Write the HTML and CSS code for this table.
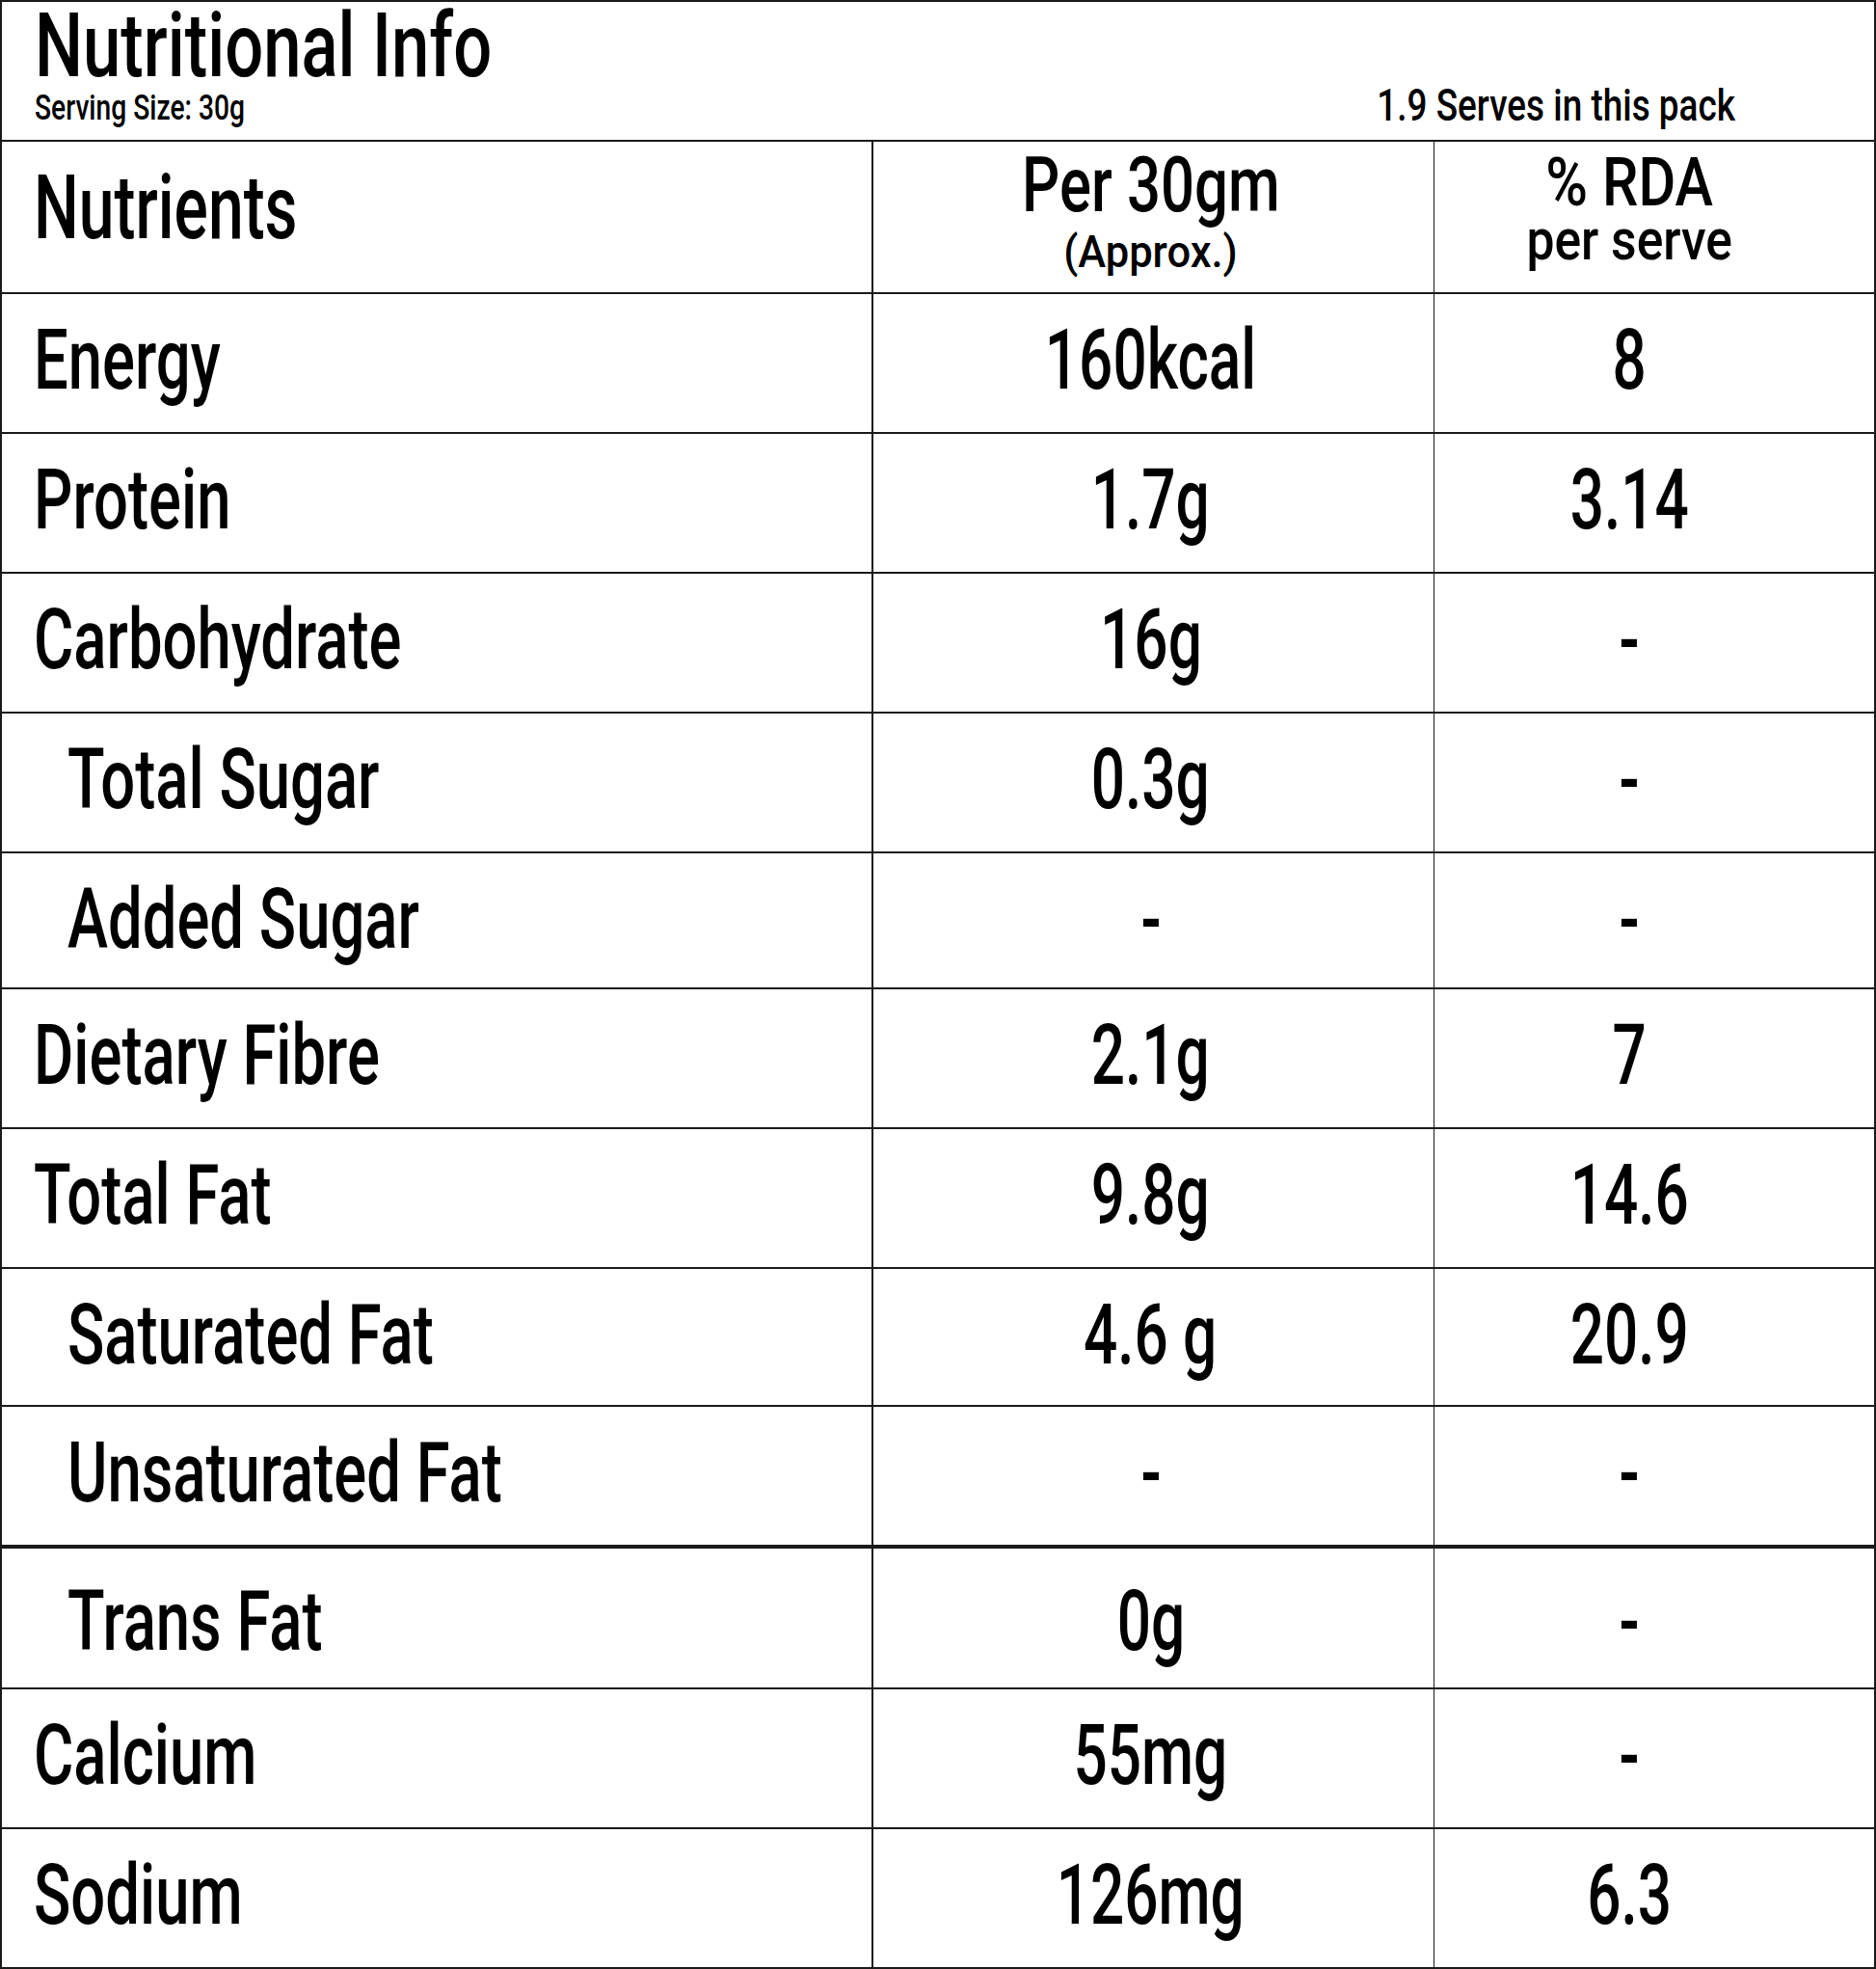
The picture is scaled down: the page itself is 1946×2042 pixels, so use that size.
FILE: index.html
```html
<!DOCTYPE html>
<html lang="en">
<head>
<meta charset="utf-8">
<title>Nutritional Info</title>
<link rel="stylesheet" href="styles.css">
</head>
<body>
<div class="panel">
  <div class="title-block">
    <div class="title-left">
      <div class="sx title">Nutritional Info</div>
      <div class="sx serving">Serving Size: 30g</div>
    </div>
    <div class="serves"><span class="sx serves-text">1.9 Serves in this pack</span></div>
  </div>

  <div class="row row-head">
    <div class="cell cell-name head-name"><div class="sx nutrients">Nutrients</div></div>
    <div class="cell cell-per head-per">
      <span class="sx per">Per 30gm</span>
      <span class="sx approx">(Approx.)</span>
    </div>
    <div class="cell cell-rda head-rda">
      <span class="sx rda">% RDA</span>
      <span class="sx perserve">per serve</span>
    </div>
  </div>

  <div class="row">
    <div class="cell cell-name"><div class="sx lab">Energy</div></div>
    <div class="cell cell-per"><span class="sx val">160kcal</span></div>
    <div class="cell cell-rda"><span class="sx val">8</span></div>
  </div>
  <div class="row">
    <div class="cell cell-name"><div class="sx lab">Protein</div></div>
    <div class="cell cell-per"><span class="sx val">1.7g</span></div>
    <div class="cell cell-rda"><span class="sx val">3.14</span></div>
  </div>
  <div class="row">
    <div class="cell cell-name"><div class="sx lab">Carbohydrate</div></div>
    <div class="cell cell-per"><span class="sx val">16g</span></div>
    <div class="cell cell-rda"><span class="sx val">-</span></div>
  </div>
  <div class="row">
    <div class="cell cell-name indent"><div class="sx lab">Total Sugar</div></div>
    <div class="cell cell-per"><span class="sx val">0.3g</span></div>
    <div class="cell cell-rda"><span class="sx val">-</span></div>
  </div>
  <div class="row row-short">
    <div class="cell cell-name indent"><div class="sx lab">Added Sugar</div></div>
    <div class="cell cell-per"><span class="sx val">-</span></div>
    <div class="cell cell-rda"><span class="sx val">-</span></div>
  </div>
  <div class="row">
    <div class="cell cell-name"><div class="sx lab">Dietary Fibre</div></div>
    <div class="cell cell-per"><span class="sx val">2.1g</span></div>
    <div class="cell cell-rda"><span class="sx val">7</span></div>
  </div>
  <div class="row">
    <div class="cell cell-name"><div class="sx lab">Total Fat</div></div>
    <div class="cell cell-per"><span class="sx val">9.8g</span></div>
    <div class="cell cell-rda"><span class="sx val">14.6</span></div>
  </div>
  <div class="row row-mid">
    <div class="cell cell-name indent"><div class="sx lab">Saturated Fat</div></div>
    <div class="cell cell-per"><span class="sx val">4.6 g</span></div>
    <div class="cell cell-rda"><span class="sx val">20.9</span></div>
  </div>
  <div class="row">
    <div class="cell cell-name indent"><div class="sx lab">Unsaturated Fat</div></div>
    <div class="cell cell-per"><span class="sx val">-</span></div>
    <div class="cell cell-rda"><span class="sx val">-</span></div>
  </div>
  <div class="row row-thick">
    <div class="cell cell-name indent"><div class="sx lab">Trans Fat</div></div>
    <div class="cell cell-per"><span class="sx val">0g</span></div>
    <div class="cell cell-rda"><span class="sx val">-</span></div>
  </div>
  <div class="row">
    <div class="cell cell-name"><div class="sx lab">Calcium</div></div>
    <div class="cell cell-per"><span class="sx val">55mg</span></div>
    <div class="cell cell-rda"><span class="sx val">-</span></div>
  </div>
  <div class="row">
    <div class="cell cell-name"><div class="sx lab">Sodium</div></div>
    <div class="cell cell-per"><span class="sx val">126mg</span></div>
    <div class="cell cell-rda"><span class="sx val">6.3</span></div>
  </div>
</div>
</body>
</html>
```

FILE: styles.css
```css
* {
  box-sizing: border-box;
}

body {
  margin: 0;
  background: #ffffff;
  color: #000000;
  font-family: Roboto, "Liberation Sans", Arial, sans-serif;
  font-weight: 500;
}

.panel {
  width: 1946px;
  height: 2042px;
  border: 2px solid #1a1a1a;
}

/* condensed look: horizontally squeezed glyphs */
.sx {
  white-space: nowrap;
  transform: scaleX(var(--sx, 0.72));
  transform-origin: left center;
}

/* ---------- title block ---------- */
.title-block {
  height: 143px;
  display: flex;
  justify-content: space-between;
}

.title-left {
  padding-left: 34px;
}

.title {
  --sx: 0.767;
  font-size: 92px;
  line-height: 86px;
  padding-top: 3px;
}

.serving {
  --sx: 0.783;
  font-size: 36px;
  line-height: 34px;
  margin-top: 4px;
}

.serves {
  align-self: flex-end;
  margin-bottom: 13px;
  margin-right: 144px;
}

.serves-text {
  --sx: 0.803;
  display: inline-block;
  font-size: 46px;
  line-height: 46px;
  transform-origin: right center;
}

/* ---------- rows ---------- */
.row {
  display: grid;
  grid-template-columns: 904px 582px 1fr;
  height: 145px;
  border-top: 2px solid #1a1a1a;
}

.row-head {
  height: 158px;
}

.row-short {
  height: 141px;
}

.row-mid {
  height: 143px;
}

.row-thick {
  height: 148px;
  border-top-width: 4px;
}

.cell {
  padding-top: 24px;
}

.row-thick .cell {
  padding-top: 31px;
}

.cell-name {
  padding-left: 33px;
  border-right: 2px solid #1a1a1a;
}

.cell-name.indent {
  padding-left: 68px;
}

.cell-per {
  display: flex;
  flex-direction: column;
  align-items: center;
  padding-right: 6px;
  border-right: 1px solid #1a1a1a;
}

.cell-rda {
  display: flex;
  flex-direction: column;
  align-items: center;
  padding-right: 52px;
}

.lab {
  --sx: 0.72;
  font-size: 88px;
  line-height: 88px;
}

.val {
  --sx: 0.705;
  display: inline-block;
  font-size: 88px;
  line-height: 88px;
  transform-origin: center center;
}

/* ---------- header row ---------- */
.head-name {
  padding-top: 23px;
}

.nutrients {
  --sx: 0.717;
  font-size: 92px;
  line-height: 92px;
}

.head-per {
  padding-top: 5px;
}

.per {
  --sx: 0.77;
  display: inline-block;
  font-size: 80px;
  line-height: 80px;
  transform-origin: center center;
}

.approx {
  --sx: 0.945;
  display: inline-block;
  font-size: 46px;
  line-height: 46px;
  margin-top: 6px;
  transform-origin: center center;
}

.head-rda {
  padding-top: 10px;
}

.rda {
  --sx: 0.85;
  display: inline-block;
  font-size: 70px;
  line-height: 64px;
  transform-origin: center center;
}

.perserve {
  --sx: 0.86;
  display: inline-block;
  font-size: 60px;
  line-height: 56px;
  margin-top: 0;
  transform-origin: center center;
}
```
